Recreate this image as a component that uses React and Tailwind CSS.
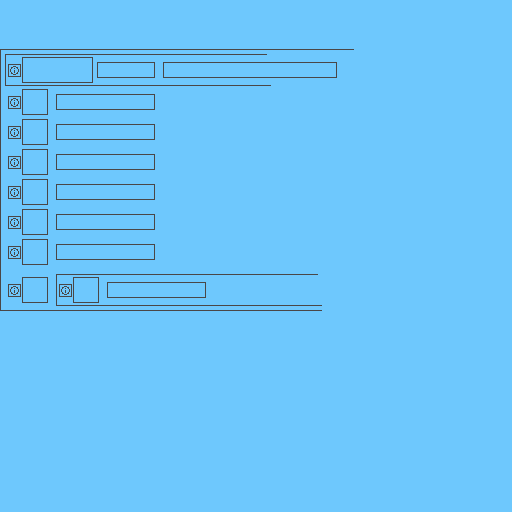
import React from "react";

const INK = "#4a4747";

// 9x9 pixel glyph: a ring around a small "i"
const GLYPH = [
  "...###...",
  ".##...##.",
  ".#..#..#.",
  "#.......#",
  "#...#...#",
  "#...#...#",
  ".#..#..#.",
  ".##...##.",
  "...###...",
];

function Info() {
  return (
    <div className="flex size-[13px] shrink-0 items-center justify-center border border-[#4a4747]">
      <svg width="9" height="9" viewBox="0 0 9 9" shapeRendering="crispEdges">
        {GLYPH.flatMap((row, y) =>
          [...row].map((c, x) =>
            c === "#" ? <rect key={`${x}-${y}`} x={x} y={y} width="1" height="1" fill={INK} /> : null
          )
        )}
      </svg>
    </div>
  );
}

function Box({ className }) {
  return <div className={`shrink-0 border border-[#4a4747] ${className}`} />;
}

function Rule({ className }) {
  return <div className={`h-px shrink-0 bg-[#4a4747] ${className}`} />;
}

function Row() {
  return (
    <div className="flex h-[26px] items-center">
      <Info />
      <Box className="ml-px size-[26px]" />
      <Box className="ml-2 h-4 w-[99px]" />
    </div>
  );
}

export default function App() {
  return (
    <main className="h-[512px] w-[512px] overflow-hidden bg-[#6ec8fd] pt-[49px]">
      <section className="flex h-[262px] flex-col border-l border-[#4a4747]">
        <Rule className="w-[353px]" />
        <header className="mt-1 ml-1 flex h-8 shrink-0 flex-col border-l border-[#4a4747]">
          <Rule className="w-[261px]" />
          <div className="flex h-[30px] items-center pl-0.5">
            <Info />
            <Box className="ml-px h-[26px] w-[71px]" />
            <Box className="ml-1 h-4 w-[58px]" />
            <Box className="ml-2 h-4 w-[174px]" />
          </div>
          <Rule className="w-[265px]" />
        </header>
        <div className="mt-[3px] flex flex-col gap-1 pl-[7px]">
          {[0, 1, 2, 3, 4, 5].map((i) => (
            <Row key={i} />
          ))}
        </div>
        <div className="mt-[9px] flex h-8 shrink-0 items-center pl-[7px]">
          <Info />
          <Box className="ml-px size-[26px]" />
          <div className="ml-2 flex h-8 flex-col border-l border-[#4a4747]">
            <Rule className="w-[261px]" />
            <div className="flex h-[30px] items-center pl-0.5">
              <Row />
            </div>
            <Rule className="w-[265px]" />
          </div>
        </div>
        <Rule className="mt-1 w-[321px]" />
      </section>
    </main>
  );
}
